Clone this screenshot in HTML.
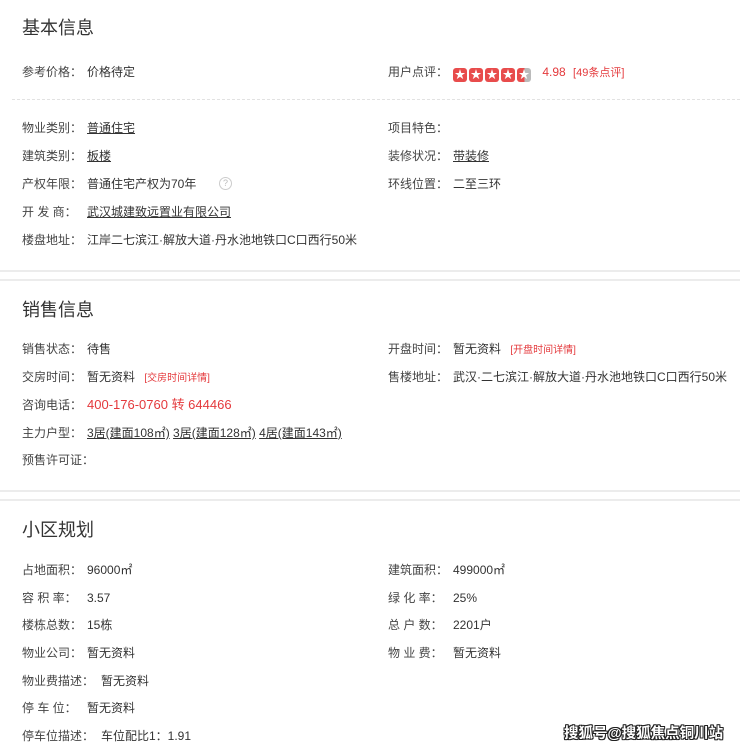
<!DOCTYPE html>
<html><head><meta charset="utf-8"><style>
body{margin:0;width:740px;height:749px;background:#fff;position:relative;overflow:hidden;font-family:"Liberation Sans","Noto Sans CJK SC",sans-serif;font-size:12px;color:#333}
.a{position:absolute;white-space:nowrap;line-height:16px}
.t{font-size:18px;color:#333;line-height:24px}
.l{color:#444;display:inline-block;width:65px}
.l2{color:#444;display:inline-block;width:79px}
.u{text-decoration:underline}
.r{color:#e4393c}
.hl{position:absolute;left:0;width:740px;height:2px;background:#ececec}
.dash{position:absolute;left:12px;width:728px;border-top:1px dashed #e2e2e2;top:99px}
.st{display:inline-block;width:14px;height:14px;border-radius:3px;background:#e84c4c;margin-right:2px;vertical-align:-2px;color:#fff;font-size:11px;text-align:center;line-height:14px}
.wm{position:absolute;left:564px;top:722px;font-size:14.5px;font-weight:bold;color:#fff;text-shadow:1px 0 #222,-1px 0 #222,0 1px #222,0 -1px #222,1px 1px #222,-1px -1px #222,1px -1px #222,-1px 1px #222}
</style></head><body>
<div class="a t" style="left:22px;top:16px">基本信息</div>
<div class="a" style="left:22px;top:64px"><span class="l">参考价格：</span>价格待定</div>
<div class="a" style="left:388px;top:64px"><span class="l">用户点评：</span><span class="st">★</span><span class="st">★</span><span class="st">★</span><span class="st">★</span><span class="st" style="background:linear-gradient(90deg,#e84c4c 55%,#bbb 55%)">★</span> <span class="r" style="margin-left:6px">4.98</span> <span class="r" style="font-size:11px;margin-left:4px">[49条点评]</span></div>
<div class="dash"></div>
<div class="a" style="left:22px;top:120px"><span class="l">物业类别：</span><span class="u">普通住宅</span></div>
<div class="a" style="left:22px;top:148px"><span class="l">建筑类别：</span><span class="u">板楼</span></div>
<div class="a" style="left:22px;top:176px"><span class="l">产权年限：</span>普通住宅产权为70年</div>
<div class="a" style="left:219px;top:177px;width:11px;height:11px;border:1px solid #ccc;border-radius:50%;font-size:9px;line-height:11px;text-align:center;color:#bbb">?</div>
<div class="a" style="left:22px;top:204px"><span class="l">开 发 商：</span><span class="u">武汉城建致远置业有限公司</span></div>
<div class="a" style="left:22px;top:232px"><span class="l">楼盘地址：</span>江岸二七滨江·解放大道·丹水池地铁口C口西行50米</div>
<div class="a" style="left:388px;top:120px"><span class="l">项目特色：</span></div>
<div class="a" style="left:388px;top:148px"><span class="l">装修状况：</span><span class="u">带装修</span></div>
<div class="a" style="left:388px;top:176px"><span class="l">环线位置：</span>二至三环</div>
<div class="hl" style="top:270px"></div><div class="hl" style="top:279px"></div>

<div class="a t" style="left:22px;top:298px">销售信息</div>
<div class="a" style="left:22px;top:341px"><span class="l">销售状态：</span>待售</div>
<div class="a" style="left:22px;top:369px"><span class="l">交房时间：</span>暂无资料 <span class="r" style="font-size:10px;margin-left:6px">[交房时间详情]</span></div>
<div class="a" style="left:22px;top:397px"><span class="l">咨询电话：</span><span class="r" style="font-size:13px">400-176-0760 转 644466</span></div>
<div class="a" style="left:22px;top:425px"><span class="l">主力户型：</span><span class="u">3居(建面108㎡)</span> <span class="u">3居(建面128㎡)</span> <span class="u">4居(建面143㎡)</span></div>
<div class="a" style="left:22px;top:452px"><span class="l">预售许可证：</span></div>
<div class="a" style="left:388px;top:341px"><span class="l">开盘时间：</span>暂无资料 <span class="r" style="font-size:10px;margin-left:6px">[开盘时间详情]</span></div>
<div class="a" style="left:388px;top:369px"><span class="l">售楼地址：</span>武汉·二七滨江·解放大道·丹水池地铁口C口西行50米</div>
<div class="hl" style="top:490px"></div><div class="hl" style="top:499px"></div>

<div class="a t" style="left:22px;top:518px">小区规划</div>
<div class="a" style="left:22px;top:562px"><span class="l">占地面积：</span>96000㎡</div>
<div class="a" style="left:22px;top:590px"><span class="l">容 积 率：</span>3.57</div>
<div class="a" style="left:22px;top:617px"><span class="l">楼栋总数：</span>15栋</div>
<div class="a" style="left:22px;top:645px"><span class="l">物业公司：</span>暂无资料</div>
<div class="a" style="left:22px;top:673px"><span class="l2">物业费描述：</span>暂无资料</div>
<div class="a" style="left:22px;top:700px"><span class="l">停 车 位：</span>暂无资料</div>
<div class="a" style="left:22px;top:728px"><span class="l2">停车位描述：</span>车位配比1：1.91</div>
<div class="a" style="left:388px;top:562px"><span class="l">建筑面积：</span>499000㎡</div>
<div class="a" style="left:388px;top:590px"><span class="l">绿 化 率：</span>25%</div>
<div class="a" style="left:388px;top:617px"><span class="l">总 户 数：</span>2201户</div>
<div class="a" style="left:388px;top:645px"><span class="l">物 业 费：</span>暂无资料</div>
<div class="wm">搜狐号@搜狐焦点铜川站</div>
</body></html>
